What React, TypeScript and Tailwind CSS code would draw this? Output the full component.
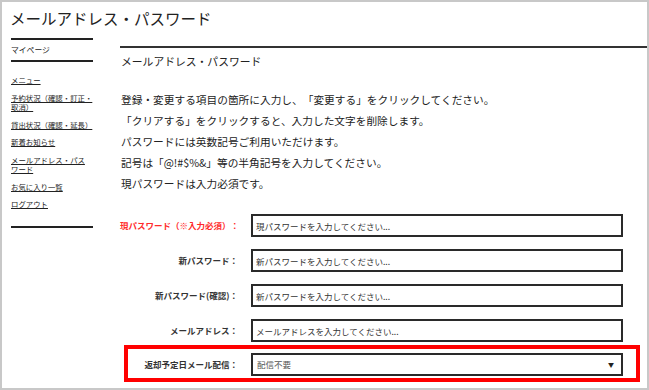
import React from "react";

const menu = [
  ["メニュー"],
  ["予約状況（確認・訂正・", "取消）"],
  ["貸出状況（確認・延長）"],
  ["新着お知らせ"],
  ["メールアドレス・パス", "ワード"],
  ["お気に入り一覧"],
  ["ログアウト"],
];

const fields = [
  { label: "現パスワード（※入力必須）：", placeholder: "現パスワードを入力してください...", required: true },
  { label: "新パスワード：", placeholder: "新パスワードを入力してください..." },
  { label: "新パスワード(確認)：", placeholder: "新パスワードを入力してください..." },
  { label: "メールアドレス：", placeholder: "メールアドレスを入力してください..." },
];

export default function App() {
  return (
    <div className="w-[649px] h-[390px] overflow-hidden bg-white border-2 border-[#c8c8c8] text-[#222] [text-spacing-trim:space-all] font-['Noto_Sans_CJK_JP','Noto_Sans',sans-serif]">
      {/* Title */}
      <h1 className="pl-[8px] pt-[6px] h-[26px] text-[15.5px] leading-[20px] font-normal">
        メールアドレス・パスワード
      </h1>

      <div className="flex">
        {/* Sidebar */}
        <aside className="ml-[9px] w-[82px] mt-[10px] shrink-0">
          <div className="border-t-2 border-b-2 border-[#222] h-[24px] flex items-center text-[7.8px]">
            マイページ
          </div>
          <ul className="mt-[13px] flex flex-col gap-[8px]">
            {menu.map((lines, i) => (
              <li key={i} className="text-[7.4px] leading-[9.5px] whitespace-nowrap underline underline-offset-1">
                {lines.map((l, j) => (
                  <div key={j}>{l}</div>
                ))}
              </li>
            ))}
          </ul>
          <div className="mt-[17px] border-t-2 border-[#222]" />
        </aside>

        {/* Main */}
        <main className="ml-[27px] flex-1 mt-[18px] border-t-2 border-[#333]">
          <h2 className="mt-[5px] pl-[1px] text-[10.8px] leading-[16px] font-normal">
            メールアドレス・パスワード
          </h2>

          <div className="mt-[20px] pl-[1px] text-[10.7px] leading-[21px]">
            <p>登録・変更する項目の箇所に入力し、「変更する」をクリックしてください。</p>
            <p>「クリアする」をクリックすると、入力した文字を削除します。</p>
            <p>パスワードには英数記号ご利用いただけます。</p>
            <p>記号は「@!#$%&」等の半角記号を入力してください。</p>
            <p>現パスワードは入力必須です。</p>
          </div>

          <div className="mt-[20px] flex flex-col gap-[12px]">
            {fields.map((f) => (
              <div key={f.label} className="flex items-center gap-[13px]">
                <label
                  className={
                    "w-[118px] text-right text-[8.5px] font-bold whitespace-nowrap " +
                    (f.required ? "text-[#ff2a2a]" : "text-[#333]")
                  }
                >
                  {f.label}
                </label>
                <input
                  type="text"
                  placeholder={f.placeholder}
                  className="w-[372px] h-[23px] border-2 border-[#2a2a2a] px-[3px] text-[8.5px] placeholder:text-[#333] outline-none"
                />
              </div>
            ))}
          </div>

          {/* Highlighted select row */}
          <div className="mt-[3px] ml-[4px] w-[516px] border-4 border-[#ff0000] pt-[4px] pb-[2px] flex items-center gap-[13px]">
            <label className="w-[110px] text-right text-[8.5px] font-bold text-[#333] whitespace-nowrap">
              返却予定日メール配信：
            </label>
            <div className="w-[372px] h-[23px] border-2 border-[#2a2a2a] pl-[4px] pr-[7px] flex items-center justify-between text-[8.5px] text-[#555]">
              <span>配信不要</span>
              <span className="text-[6px] text-[#222]">▼</span>
            </div>
          </div>
        </main>
      </div>
    </div>
  );
}
